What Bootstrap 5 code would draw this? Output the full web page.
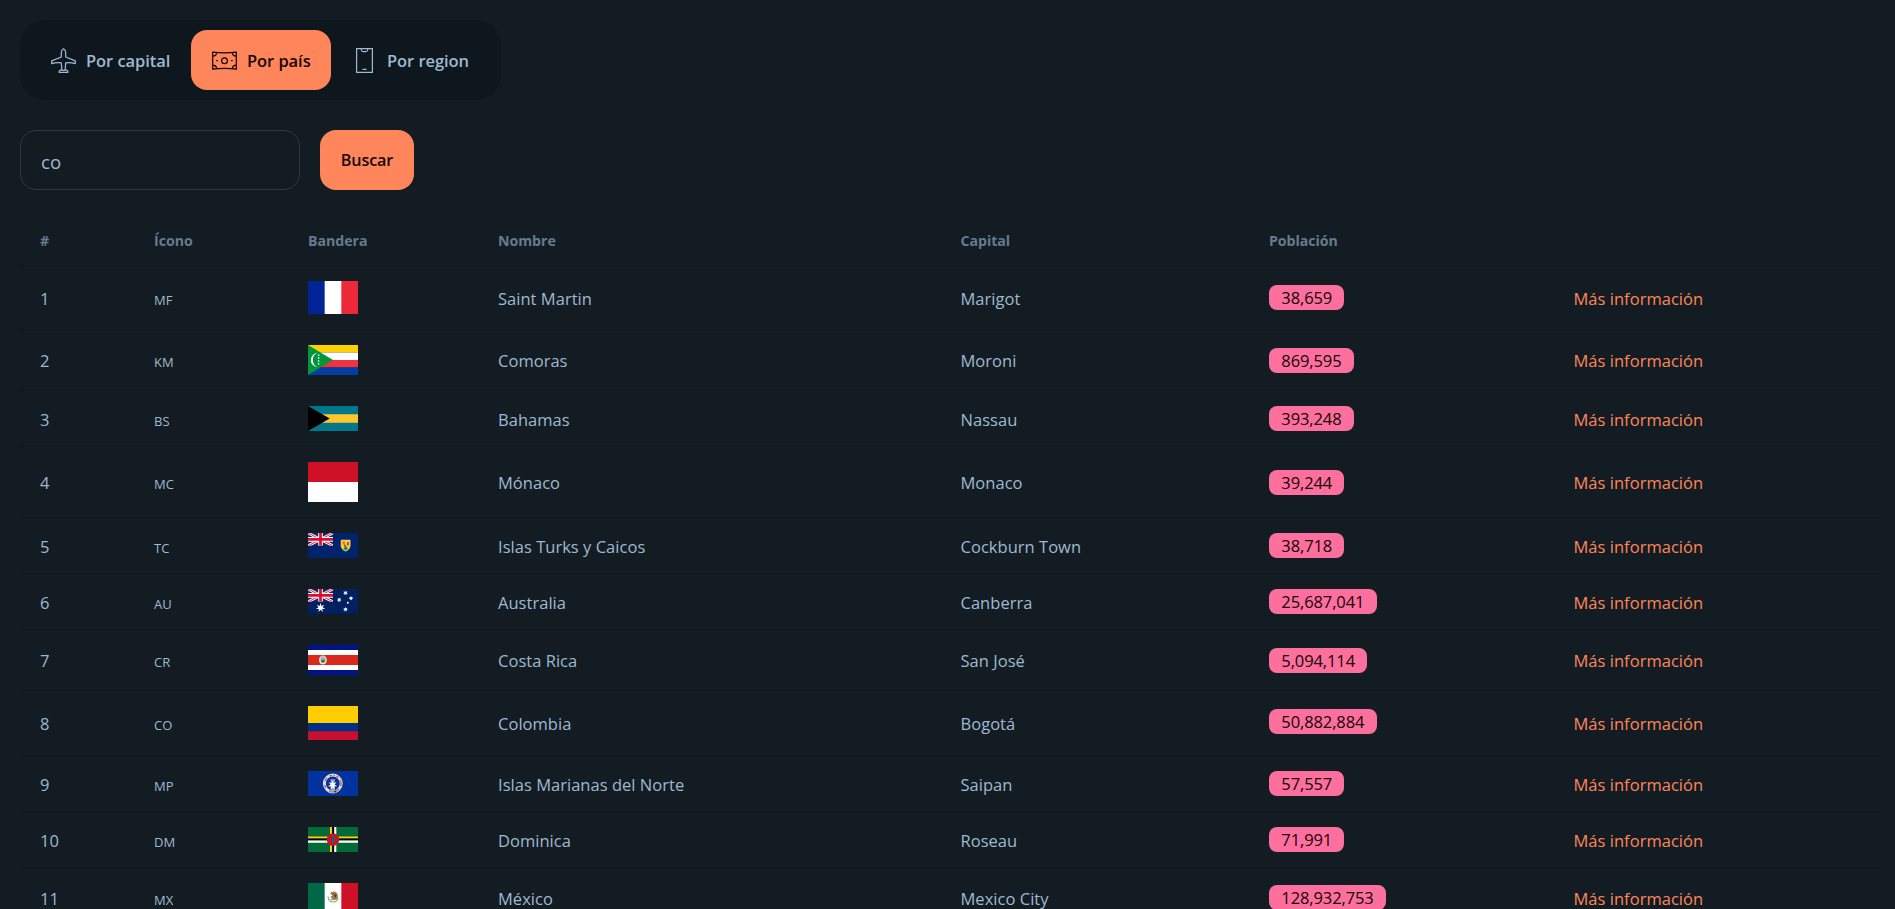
<!DOCTYPE html>
<html lang="es" data-bs-theme="dark">
<head>
<meta charset="utf-8">
<meta name="viewport" content="width=device-width, initial-scale=1">
<title>Países</title>
<link href="https://cdn.jsdelivr.net/npm/bootstrap@5.3.0/dist/css/bootstrap.min.css" rel="stylesheet">
<style>
  body { background: #131c22; color: #9fb9d0; font-family: "Open Sans", "Noto Sans", sans-serif; font-size: 16.5px; line-height: 25px; height: 100vh; overflow: hidden; }
  .page { padding: 20px 15px 0 20px; }
  .menu-bar { background: #0e171e; border-radius: 25px; padding: 10px; width: 481px; height: 80px; }
  .menu-bar .nav-link { color: #9fb9d0; border-radius: 16px; height: 60px; gap: 10px; padding: 0 0 0 21px; font-size: 16.5px; font-weight: 600; letter-spacing: -.06px; }
  .menu-bar .nav-link.active { background: #ff865b; color: #160603; }
  .menu-bar svg { width: 25px; height: 25px; fill: none; stroke: currentColor; flex: none; }
  .w-a { width: 161px; } .w-b { width: 140px; } .w-c { width: 160px; }
  .search { margin-top: 30px; gap: 20px; }
  .search .form-control { width: 280px; height: 60px; background: transparent; border: 1px solid #2d3942; border-radius: 16px; padding: 2px 20px 0; font-size: 18.7px; color: #9fb9d0; }
  .search .btn { width: 94px; height: 60px; padding: 1px 0 0; border: 0; border-radius: 16px; background: #ff865b; color: #160603; font-size: 16.2px; font-weight: 600; letter-spacing: -.15px; }
  .countries { margin: 26px 0 0; table-layout: fixed; width: 1860px; --bs-table-bg: transparent; --bs-table-color: #9fb9d0; color: #9fb9d0; border-collapse: separate; border-spacing: 0; }
  .countries > thead > tr > th { height: 50px; padding: 0 20px; font-size: 14.2px; letter-spacing: -.05px; line-height: 20px; font-weight: 700; color: #657b8f; vertical-align: middle; border-bottom: 1px solid #0e171e; }
  .countries > tbody > tr > td { padding: 1px 20px 0; vertical-align: middle; border-bottom: 1px solid #0e171e; color: #9fb9d0; white-space: nowrap; letter-spacing: .03px; }
  .countries > tbody > tr > td.fig { padding-top: 0; }
  .h56 { height: 56px; } .h60 { height: 60px; } .h61 { height: 61px; } .h64 { height: 64px; } .h65 { height: 65px; } .h71 { height: 71px; }
  .code { font-size: 13px; font-weight: 500; position: relative; top: 1px; }
  .flag { display: block; width: 50px; }
  .pop { display: block; width: max-content; height: 25px; line-height: 26px; padding: 0 12.3px; border-radius: 8px; background: #fd6f9c; color: #16040a; letter-spacing: -.1px; }
  .more { color: #ff865b; text-decoration: none; }
</style>
</head>
<body>
<svg width="0" height="0" class="position-absolute" aria-hidden="true">
  <defs>
    <symbol id="jack" viewBox="0 0 60 30" preserveAspectRatio="none">
      <path d="M0 0H60V30H0z" fill="#0a2a6b"/>
      <path d="M0 0L60 30M60 0L0 30" stroke="#fff" stroke-width="6.5"/>
      <path d="M0 0L60 30M60 0L0 30" stroke="#e0304e" stroke-width="2.4"/>
      <path d="M30 0V30M0 15H60" stroke="#fff" stroke-width="11"/>
      <path d="M30 0V30M0 15H60" stroke="#e00a2e" stroke-width="6.5"/>
    </symbol>
    <symbol id="star" viewBox="-10 -10 20 20">
      <path fill="#fff" d="M0-10L1.8-3.7L7.8-6.2L4-.9L9.7 2.2L3.3 2.6L4.3 9L0 4.2L-4.3 9L-3.3 2.6L-9.7 2.2L-4-.9L-7.8-6.2L-1.8-3.7z"/>
    </symbol>
  </defs>
</svg>
<main class="page">
  <nav class="nav menu-bar flex-nowrap">
    <a class="nav-link d-flex align-items-center w-a" href="#">
      <svg viewBox="0 0 25 25" stroke-width="1.25" stroke-linejoin="round"><path d="M10.3 9V4.2Q10.6 1.6 12.5.7Q14.4 1.6 14.7 4.2V9L24.3 12.8V15.6Q19.5 14 14.7 14.8L14.2 21.4L16.8 23V24.4H8.2V23L10.8 21.4L10.3 14.8Q5.5 14 .7 15.6V12.8z M10.8 22.3H14.2"/></svg>
      <span>Por capital</span></a>
    <a class="nav-link active d-flex align-items-center w-b" href="#">
      <svg viewBox="0 0 25 25" stroke-width="1.2"><path d="M.7 4.2Q12.5 5.6 24.3 4.2V21.2Q12.5 19.7.7 21.2z M.9 8.2Q4.2 8 4.8 4.8M24.1 8.2Q20.8 8 20.2 4.8M.9 17.2Q4.2 17.4 4.8 20.6M24.1 17.2Q20.8 17.4 20.2 20.6"/><circle cx="12.5" cy="12.7" r="2.9"/><path d="M4.3 12.7H6M19 12.7H20.7"/></svg>
      <span>Por país</span></a>
    <a class="nav-link d-flex align-items-center w-c" href="#">
      <svg viewBox="0 0 25 25" stroke-width="1.2"><path d="M4.6.6H20.4V24.4H4.6z M9 .6L9.6 2.6Q10 3.6 11 3.6H14Q15 3.6 15.4 2.6L16 .6 M10.4 21.3H14.6"/></svg>
      <span>Por region</span></a>
  </nav>

  <form class="search d-flex">
    <input class="form-control shadow-none" type="text" value="co" aria-label="Buscar país">
    <button class="btn" type="button">Buscar</button>
  </form>

  <table class="table countries">
    <colgroup><col style="width:114px"><col style="width:154px"><col style="width:190px"><col style="width:462.5px"><col style="width:308.5px"><col style="width:304.5px"><col></colgroup>
    <thead><tr><th>#</th><th>Ícono</th><th>Bandera</th><th>Nombre</th><th>Capital</th><th>Población</th><th></th></tr></thead>
    <tbody>
      <tr class="h64"><td>1</td><td><span class="code">MF</span></td>
        <td class="fig"><svg class="flag" height="33" viewBox="0 0 50 33"><path fill="#fff" d="M0 0h50v33H0z"/><path fill="#002395" d="M0 0h16.67v33H0z"/><path fill="#ed2939" d="M33.33 0H50v33H33.33z"/></svg></td>
        <td>Saint Martin</td><td>Marigot</td><td class="fig"><span class="pop">38,659</span></td><td><a class="more" href="#">Más información</a></td></tr>
      <tr class="h61"><td>2</td><td><span class="code">KM</span></td>
        <td class="fig"><svg class="flag" height="30" viewBox="0 0 50 30"><path fill="#ffd100" d="M0 0h50v7.5H0z"/><path fill="#fff" d="M0 7.5h50V15H0z"/><path fill="#ef3340" d="M0 15h50v7.5H0z"/><path fill="#003da5" d="M0 22.5h50V30H0z"/><path fill="#009639" d="M0 0L25 15L0 30z"/><path fill="#fff" d="M9.8 8A7 7 0 1 0 9.8 22A7.4 7.4 0 0 1 9.8 8z"/><path stroke="#fff" stroke-width="1.4" stroke-dasharray="1.5 1.4" d="M10.6 9.4V21"/></svg></td>
        <td>Comoras</td><td>Moroni</td><td class="fig"><span class="pop">869,595</span></td><td><a class="more" href="#">Más información</a></td></tr>
      <tr class="h56"><td>3</td><td><span class="code">BS</span></td>
        <td class="fig"><svg class="flag" height="25" viewBox="0 0 50 25"><path fill="#00778b" d="M0 0h50v25H0z"/><path fill="#ffc72c" d="M0 8.33h50v8.34H0z"/><path d="M0 0L21.7 12.5L0 25z"/></svg></td>
        <td>Bahamas</td><td>Nassau</td><td class="fig"><span class="pop">393,248</span></td><td><a class="more" href="#">Más información</a></td></tr>
      <tr class="h71"><td>4</td><td><span class="code">MC</span></td>
        <td class="fig"><svg class="flag" height="40" viewBox="0 0 50 40"><path fill="#fff" d="M0 0h50v40H0z"/><path fill="#ce1126" d="M0 0h50v20H0z"/></svg></td>
        <td>Mónaco</td><td>Monaco</td><td class="fig"><span class="pop">39,244</span></td><td><a class="more" href="#">Más información</a></td></tr>
      <tr class="h56"><td>5</td><td><span class="code">TC</span></td>
        <td class="fig"><svg class="flag" height="25" viewBox="0 0 50 25"><path fill="#00246b" d="M0 0h50v25H0z"/><use href="#jack" width="25" height="12.8"/><path fill="#ffd02e" stroke="#d9c58e" stroke-width=".6" d="M33 7h9.2v6Q42 16.5 37.6 18.3Q33.2 16.5 33 13z"/><path fill="#e2762b" d="M34.5 8.5h2.4v3h-2.4z"/><path fill="#d92b4b" d="M39 9h1.8v3.4H39zM36 11.5h1.6v2H36z"/><path fill="#159447" d="M37.6 12.6L40 15.4L37.6 17.4L35.4 15.4z"/></svg></td>
        <td>Islas Turks y Caicos</td><td>Cockburn Town</td><td class="fig"><span class="pop">38,718</span></td><td><a class="more" href="#">Más información</a></td></tr>
      <tr class="h56"><td>6</td><td><span class="code">AU</span></td>
        <td class="fig"><svg class="flag" height="25" viewBox="0 0 50 25"><path fill="#00205f" d="M0 0h50v25H0z"/><use href="#jack" width="25" height="12.8"/><use href="#star" x="7.7" y="13.8" width="9.8" height="9.8"/><use href="#star" x="34.8" y="1.2" width="5.4" height="5.4"/><use href="#star" x="28.6" y="8.2" width="5.2" height="5.2"/><use href="#star" x="40.5" y="6.8" width="5" height="5"/><use href="#star" x="34.8" y="17.7" width="5.4" height="5.4"/><circle cx="39.8" cy="13.8" r="1" fill="#fff"/></svg></td>
        <td>Australia</td><td>Canberra</td><td class="fig"><span class="pop">25,687,041</span></td><td><a class="more" href="#">Más información</a></td></tr>
      <tr class="h61"><td>7</td><td><span class="code">CR</span></td>
        <td class="fig"><svg class="flag" height="30" viewBox="0 0 50 30"><path fill="#00148a" d="M0 0h50v30H0z"/><path fill="#fff" d="M0 5h50v20H0z"/><path fill="#da291c" d="M0 10h50v10H0z"/><ellipse cx="14.9" cy="15" rx="3.9" ry="4.6" fill="#e8e2d6"/><path fill="#7fa9b5" d="M12.6 13.2h4.8v2.2h-4.8z"/><path fill="#1b6b4a" d="M12.8 15.2h4.4l-.8 2.4h-2.8z"/><path fill="#b98f4c" d="M13 11.6h3.8v.9H13z"/></svg></td>
        <td>Costa Rica</td><td>San José</td><td class="fig"><span class="pop">5,094,114</span></td><td><a class="more" href="#">Más información</a></td></tr>
      <tr class="h65"><td>8</td><td><span class="code">CO</span></td>
        <td class="fig"><svg class="flag" height="34" viewBox="0 0 50 34"><path fill="#ffcd00" d="M0 0h50v17H0z"/><path fill="#003087" d="M0 17h50v8.5H0z"/><path fill="#c8102e" d="M0 25.3h50V34H0z"/></svg></td>
        <td>Colombia</td><td>Bogotá</td><td class="fig pb-1"><span class="pop">50,882,884</span></td><td><a class="more" href="#">Más información</a></td></tr>
      <tr class="h56"><td>9</td><td><span class="code">MP</span></td>
        <td class="fig"><svg class="flag" height="25" viewBox="0 0 50 25"><path fill="#0032a0" d="M0 0h50v25H0z"/><circle cx="24.8" cy="12.5" r="8.4" fill="none" stroke="#e6d9e2" stroke-width="3"/><circle cx="24.8" cy="12.5" r="8.2" fill="none" stroke="#d9534f" stroke-width="1.4" stroke-dasharray="2.6 4.4"/><circle cx="24.8" cy="12.5" r="8.2" fill="none" stroke="#4f9b68" stroke-width="1.3" stroke-dasharray="1.5 6.9" stroke-dashoffset="3"/><path fill="#9aa4ad" d="M22.2 8.2h5l-.8 4.3l.6 9.5h-4.4l.6-9.5z"/><use href="#star" x="19.6" y="9.2" width="10" height="10"/><path fill="#4a3527" d="M25.6 20.3l2.6-1v2.6z"/></svg></td>
        <td>Islas Marianas del Norte</td><td>Saipan</td><td class="fig"><span class="pop">57,557</span></td><td><a class="more" href="#">Más información</a></td></tr>
      <tr class="h56"><td>10</td><td><span class="code">DM</span></td>
        <td class="fig"><svg class="flag" height="25" viewBox="0 0 50 25"><path fill="#046a38" d="M0 0h50v25H0z"/><path fill="#ffcd00" d="M0 9.4h50v2.1H0zM22 0h2.1v25H22z"/><path d="M0 11.5h50v2.1H0zM24.1 0h2.1v25h-2.1z"/><path fill="#fff" d="M0 13.6h50v2.1H0zM26.2 0h2.1v25h-2.1z"/><circle cx="25" cy="12.5" r="6.3" fill="#c8102e"/><circle cx="25" cy="12.5" r="4.9" fill="none" stroke="#5a5527" stroke-width="1" stroke-dasharray="1 2.1"/><path fill="#1f6b52" d="M24 9h2.2l.8 3.2l-1 3.8h-1.6z"/><path fill="#5b2f83" d="M24.6 10.7h1.5v2.6h-1.5z"/></svg></td>
        <td>Dominica</td><td>Roseau</td><td class="fig"><span class="pop">71,991</span></td><td><a class="more" href="#">Más información</a></td></tr>
      <tr class="h60"><td>11</td><td><span class="code">MX</span></td>
        <td class="fig"><svg class="flag" height="29" viewBox="0 0 50 29"><path fill="#fff" d="M0 0h50v29H0z"/><path fill="#006847" d="M0 0h16.67v29H0z"/><path fill="#ce1126" d="M33.33 0H50v29H33.33z"/><path fill="#a3794d" d="M22 10.2Q25 7 28.5 9.6Q30.8 12.5 29.3 16L26 17.2L22.4 13.8L24.5 12.5z"/><path fill="#5c4023" d="M25.5 10.5L28.6 12L27.2 15.2z"/><path fill="none" stroke="#8fa76a" stroke-width="1.2" d="M20 13.5Q20.6 19 25 19Q29.4 19 30 14.5"/><path fill="#4fb6c4" d="M22.6 15.6h3v1.6h-3z"/></svg></td>
        <td>México</td><td>Mexico City</td><td class="fig"><span class="pop">128,932,753</span></td><td><a class="more" href="#">Más información</a></td></tr>
    </tbody>
  </table>
</main>
<script src="https://cdn.jsdelivr.net/npm/bootstrap@5.3.0/dist/js/bootstrap.bundle.min.js"></script>
</body>
</html>
